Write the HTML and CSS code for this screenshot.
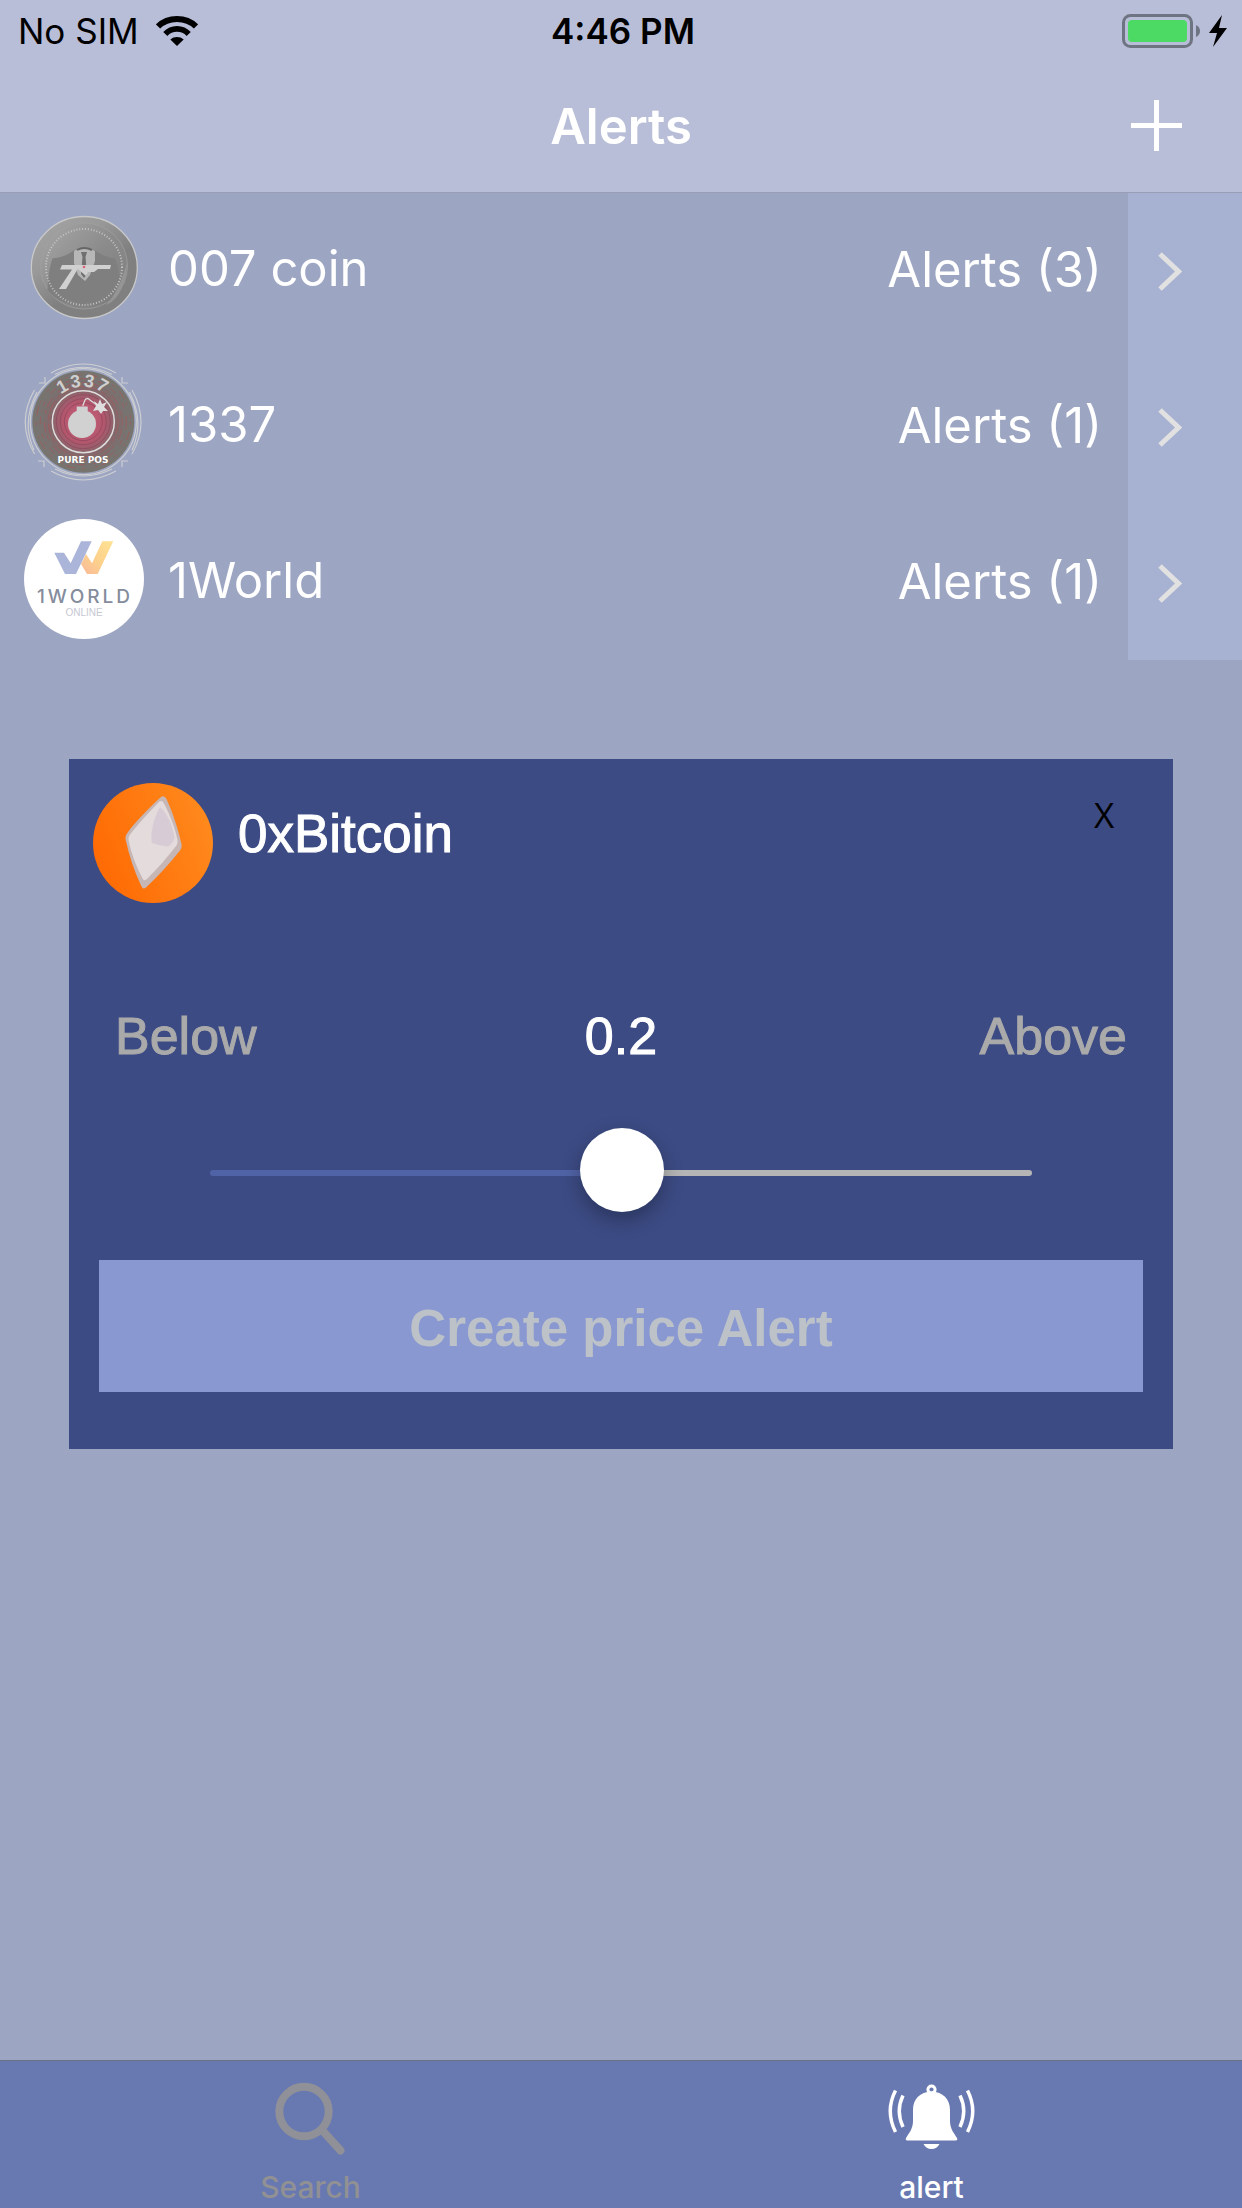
FILE: index.html
```html
<!DOCTYPE html>
<html lang="en">
<head>
<meta charset="utf-8">
<meta name="viewport" content="width=device-width, initial-scale=1">
<title>Alerts</title>
<link rel="stylesheet" href="styles.css">
</head>
<body>
<header class="top">
  <div class="status">
    <div class="status-side">
      <span>No SIM</span>
      <svg class="wifi" viewBox="0 0 42 30" aria-hidden="true">
        <path d="M2 10.500C12 .5 30 .5 40 10.500" fill="none" stroke="#000" stroke-width="6"/>
        <path d="M9.300 18C15.500 11.200 26.500 11.200 32.700 18" fill="none" stroke="#000" stroke-width="5.600"/>
        <path d="M21 30 14.300 23.500C18 20.200 24 20.200 27.700 23.500Z"/>
      </svg>
    </div>
    <span class="status-time">4:46 PM</span>
    <div class="status-side status-right">
      <svg class="battery" viewBox="0 0 106 34" aria-label="Battery charging" role="img">
        <rect x="1.500" y="1.500" width="68" height="31" rx="7" fill="none" stroke="#6f7482" stroke-width="3"/>
        <rect x="6" y="6" width="59" height="22" rx="4" fill="#4cd964"/>
        <path d="M74 11Q78 13 78 17T74 23Z" fill="#6f7482"/>
        <path d="M100 1 87 19H95L91 33 105 14H97Z"/>
      </svg>
    </div>
  </div>
  <div class="nav">
    <h1 class="nav-title">Alerts</h1>
    <button class="nav-add" type="button" aria-label="Add alert">
      <svg viewBox="0 0 51 51" aria-hidden="true"><path d="M25.500 0V51M0 25.500H51" stroke="#fff" stroke-width="5"/></svg>
    </button>
  </div>
</header>

<main class="content">
  <ul class="coins">
    <li class="coin">
      <svg class="coin-logo" viewBox="0 0 120 120" aria-hidden="true">
        <defs>
          <linearGradient id="steel" x1="0" y1="0" x2="1" y2="1"><stop offset="0" stop-color="#a8a8a8"/><stop offset=".5" stop-color="#8b8b8b"/><stop offset="1" stop-color="#7c7c7c"/></linearGradient>
          <linearGradient id="rim" x1="0" y1="0" x2=".8" y2="1"><stop offset="0" stop-color="#a6a6a6"/><stop offset=".35" stop-color="#999"/><stop offset=".65" stop-color="#808080"/></linearGradient>
        </defs>
        <ellipse cx="60.300" cy="60.500" rx="53" ry="51" fill="url(#rim)" stroke="#c9c9c9" stroke-width="1.300"/>
        <ellipse cx="60" cy="59" rx="43.500" ry="43" fill="url(#steel)" stroke="#a0a0a0" stroke-width=".7"/>
        <path d="M23.500 83C24 70 26 58 28.700 51.300C36 51 44 48 50 43.500H71C77 48 85 51 91 51.300C94 60 96 70 95.500 84C86 104 38 104 23.500 83Z" fill="#7f7f7f"/>
        <path d="M103 55C103 78 93 94 82 98C91 88 98 75 103 55Z" fill="#959595"/>
        <circle cx="60" cy="60" r="38" fill="none" stroke="#c4c4c4" stroke-width="2" stroke-dasharray="1 1.900"/>
        <path d="M50 44Q60 38 71 44L71 54 66 68 61 74 54 68 50 56Z" fill="#b7b7b7"/>
        <path d="M57 45H63L61.500 50 63 67 60 71 57 67 58.500 50Z" fill="#707070"/>
        <path d="M53 43Q60 39 68 43" fill="none" stroke="#666" stroke-width="2"/>
        <path d="M38 58H56L42 82H35L48 62.500H36ZM54 58H87L86 62H74L70 65H64L62 69 54 62Z" fill="#d0d0d0"/>
        <circle cx="60" cy="60" r="1.300" fill="#e0607a"/>
      </svg>
      <span class="coin-name">007 coin</span>
      <span class="coin-count">Alerts (3)</span>
      <button class="coin-open" type="button" aria-label="Open 007 coin alerts"><svg viewBox="0 0 24 39" aria-hidden="true"><path d="M2 2 20.500 19.500 2 37" fill="none" stroke="#e1e1e1" stroke-width="5"/></svg></button>
    </li>
    <li class="coin">
      <svg class="coin-logo" viewBox="0 0 120 120" aria-hidden="true">
        <defs>
          <radialGradient id="glow"><stop offset="0" stop-color="#c8607f"/><stop offset=".4" stop-color="#b4566c"/><stop offset=".62" stop-color="#86666a"/><stop offset=".8" stop-color="#787270"/><stop offset="1" stop-color="#777570"/></radialGradient>
          <path id="arc" d="M24.300 58.700A35 35 0 0 1 94.300 58.700"/>
        </defs>
        <g fill="none" stroke="#cdced2" stroke-width="1.200">
          <path d="M27 10Q59 -8 92 10M31 11.500Q59 -3 88 11.500M27 108Q59 126 92 108M31 106Q59 120 88 106M10.500 27Q-8 59 10.500 91M13 29Q-3 59 10 87M108 27Q126 59 108 91M105.500 29Q121 59 108 87"/>
          <circle cx="59.300" cy="58.700" r="53"/>
          <path d="M15 20H21V14M98 14V20H104M14 98H20V104M104 98H98V104"/>
        </g>
        <circle cx="59.300" cy="58.700" r="51" fill="url(#glow)"/>
        <g fill="none" stroke="#a2595c" stroke-width=".8">
          <circle cx="59.300" cy="58.700" r="47" stroke-dasharray="3 7 9 4 2 11"/>
          <circle cx="59.300" cy="58.700" r="43" stroke-dasharray="8 5 2 4 5 9"/>
          <circle cx="59.300" cy="58.700" r="39" stroke-dasharray="4 3 11 8"/>
          <circle cx="59.300" cy="58.700" r="35" stroke-dasharray="12 4 5 3"/>
          <circle cx="59.300" cy="58.700" r="27" stroke="#8f4860"/>
          <circle cx="59.300" cy="58.700" r="23" stroke="#8f4860"/>
          <circle cx="59.300" cy="58.700" r="19" stroke="#8f4860"/>
        </g>
        <circle cx="59.300" cy="58.700" r="31" fill="none" stroke="#dedede" stroke-width="1.500"/>
        <circle cx="58" cy="61" r="14" fill="#d2d1d1"/>
        <rect x="52.700" y="43.500" width="11" height="7" fill="#d2d1d1"/>
        <path d="M58.700 43 61 37Q63 34 66 37L73 42" fill="none" stroke="#ddd" stroke-width="1.300"/>
        <path d="M76 36 78 41 83 39 80 44 84 48 79 48 77 51 74 47 69 48 72 43 70 38 74 41Z" fill="#dedede"/>
        <text class="leet-text"><textPath href="#arc" startOffset="50%">1337</textPath></text>
        <text class="pos-text" x="59" y="100">PURE POS</text>
      </svg>
      <span class="coin-name">1337</span>
      <span class="coin-count">Alerts (1)</span>
      <button class="coin-open" type="button" aria-label="Open 1337 alerts"><svg viewBox="0 0 24 39" aria-hidden="true"><path d="M2 2 20.500 19.500 2 37" fill="none" stroke="#e1e1e1" stroke-width="5"/></svg></button>
    </li>
    <li class="coin">
      <svg class="coin-logo" viewBox="0 0 120 120" aria-hidden="true">
        <defs><linearGradient id="amber" x1="0" y1="1" x2="1" y2="0"><stop offset="0" stop-color="#f8b99a"/><stop offset=".45" stop-color="#fdd08c"/><stop offset="1" stop-color="#ffe394"/></linearGradient></defs>
        <circle cx="60" cy="60" r="60" fill="#fff"/>
        <path d="M62 35 68 44.300 78.300 22.300H89.300L73.700 55H63L57 45Z" fill="url(#amber)"/>
        <path d="M30.300 33.700H40L46.700 44.300 57 22.300H67.700L52 55H41Z" fill="#abb5da"/>
        <text class="world-text" x="61" y="84">1WORLD</text>
        <text class="online-text" x="60" y="97">ONLINE</text>
      </svg>
      <span class="coin-name">1World</span>
      <span class="coin-count">Alerts (1)</span>
      <button class="coin-open" type="button" aria-label="Open 1World alerts"><svg viewBox="0 0 24 39" aria-hidden="true"><path d="M2 2 20.500 19.500 2 37" fill="none" stroke="#e1e1e1" stroke-width="5"/></svg></button>
    </li>
  </ul>
</main>

<div class="overlay">
  <section class="dialog" role="dialog" aria-labelledby="dialog-title">
    <div class="dialog-head">
      <svg class="dialog-logo" viewBox="0 0 120 120" aria-hidden="true">
        <defs><linearGradient id="orange" x1="0" y1=".7" x2="1" y2=".3"><stop offset="0" stop-color="#ff6903"/><stop offset="1" stop-color="#ff8a1d"/></linearGradient></defs>
        <circle cx="60" cy="60" r="60" fill="url(#orange)"/>
        <path d="M67.500 14.500Q71 11.500 73.500 16C80 30 85.500 47 88.700 62Q89 65 87 67.500C77 80 65 93 53 104.500Q50 107 48.500 103.500C41 88 36 72 32.500 56Q32 53 34 50.500C43 38 55 26 67.500 14.500Z" fill="#c6b6b6"/>
        <path d="M66 19Q69 16.500 71 20.500C77 32 82 44 84.500 57Q85 60 83.500 62.500C74 75 64 86 54 96Q51 98.500 49.500 95.500C43 83 38 70 35.500 57Q35 54 37 51.500C46 40 56 29 66 19Z" fill="#e4dbdc"/>
        <path d="M67 24C75 31 79 42 81.500 54Q81 60 75 63.500Q66 63 59 60Q58 57 58.500 50C60 39 63 31 67 24Z" fill="#d7ccd5"/>
      </svg>
      <h2 class="dialog-title" id="dialog-title">0xBitcoin</h2>
      <button class="dialog-close" type="button" aria-label="Close">X</button>
    </div>
    <div class="range-labels">
      <span>Below</span>
      <output class="range-value" for="price">0.2</output>
      <span class="range-end">Above</span>
    </div>
    <input class="range" id="price" type="range" min="0" max="100" step="any" value="50.2" aria-label="Alert price">
    <button class="create" type="button">Create price Alert</button>
  </section>
</div>

<nav class="tabs">
  <a class="tab" href="#search">
    <svg class="tab-icon" viewBox="0 0 90 76" aria-hidden="true">
      <circle cx="38" cy="32.500" r="24.700" fill="none" stroke="#8f9098" stroke-width="8"/>
      <path d="M56 51 74.500 71.500" stroke="#8f9098" stroke-width="8" stroke-linecap="round"/>
    </svg>
    <span>Search</span>
  </a>
  <a class="tab tab-active" href="#alert" aria-current="page">
    <svg class="tab-icon" viewBox="0 0 90 76" aria-hidden="true">
      <circle cx="44.500" cy="10.500" r="3.600" fill="none" stroke="#fff" stroke-width="3"/>
      <path d="M44.500 12.500C56 13 63 20 63 31V42C63 50 67 54 70 59Q71 61.500 68.500 61.500H20.500Q18 61.500 19 59C22 54 26 50 26 42V31C26 20 33 13 44.500 12.500ZM36.500 65H52.500Q50 70 44.500 70T36.500 65Z" fill="#fff"/>
      <path d="M16 16.500Q8.500 32 16 48M8.500 11.500Q-2 32 8.500 53M73 16.500Q80.500 32 73 48M80.500 11.500Q91 32 80.500 53" fill="none" stroke="#fff" stroke-width="3.500"/>
    </svg>
    <span>alert</span>
  </a>
</nav>
</body>
</html>
```
FILE: styles.css
```css
* {
  box-sizing: border-box;
}

body {
  margin: 0;
  min-height: 100vh;
  display: flex;
  flex-direction: column;
  background: #9ca5c1;
  color: #fff;
  font-family: Inter, "Liberation Sans", sans-serif;
  font-size: 49px;
}

h1,
h2,
ul {
  margin: 0;
  padding: 0;
}

button {
  padding: 0;
  border: 0;
  background: none;
  color: inherit;
  font: inherit;
}

svg {
  display: block;
}

/* Status bar and title */
.top {
  background: #b9bed8;
  box-shadow: 0 1px #989eb5;
  position: relative;
}

.status,
.nav {
  display: grid;
  grid-template-columns: 1fr auto 1fr;
  align-items: center;
}

.status {
  height: 60px;
  padding: 2px 14px 0 18px;
  color: #000;
  font-size: 35px;
  line-height: 58px;
}

.status-side {
  display: flex;
  align-items: center;
  gap: 17px;
}

.status-right {
  justify-content: flex-end;
}

.status-time {
  font-weight: 600;
}

.wifi {
  width: 42px;
  height: 30px;
}

.battery {
  width: 106px;
  height: 34px;
}

.nav {
  height: 132px;
  padding: 0 60px 2px;
}

.nav-title {
  grid-column: 2;
  padding-top: 4px;
  font-size: 49px;
  font-weight: 600;
  line-height: 60px;
}

.nav-add {
  justify-self: end;
  width: 51px;
  height: 51px;
}

/* Coin list */
.content {
  flex: 1;
}

.coins {
  list-style: none;
}

.coin {
  display: flex;
  height: 156px;
  padding-left: 24px;
  line-height: 60px;
}

.coin-logo,
.dialog-logo {
  flex: none;
  width: 120px;
  height: 120px;
}

.coin-logo {
  margin-top: 15px;
}

.coin-name {
  flex: 1;
  margin: 47px 0 0 24px;
}

.coin-count {
  margin: 48px 26px 0 0;
}

.coin-open {
  display: flex;
  align-items: center;
  width: 114px;
  padding: 2px 0 0 30px;
  background: #a7b1d1;
}

.coin-open svg {
  width: 24px;
  height: 39px;
}

.leet-text,
.pos-text,
.world-text,
.online-text {
  text-anchor: middle;
}

.leet-text {
  font: bold 18px "Liberation Sans", sans-serif;
  letter-spacing: 2px;
  fill: #d0d0d0;
}

.pos-text {
  font: bold 9px "DejaVu Sans", sans-serif;
  fill: #fff;
}

.world-text {
  font: 500 19px Inter, sans-serif;
  letter-spacing: 3px;
  fill: #858c9c;
}

.online-text {
  font: 10px "Liberation Sans", sans-serif;
  fill: #c6c8d2;
}

/* New alert dialog */
.overlay {
  position: fixed;
  inset: 0;
  display: grid;
  align-items: center;
  padding: 0 69px;
  pointer-events: none;
}

.dialog {
  display: flex;
  flex-direction: column;
  padding: 24px 30px 57px;
  background: #3c4b84;
  font-family: "Liberation Sans", Arial, sans-serif;
  font-size: 52px;
  line-height: 60px;
  pointer-events: auto;
}

.dialog-head {
  display: flex;
  align-items: flex-start;
  margin-left: -6px;
}

.dialog-title {
  flex: 1;
  margin: 21px 0 0 25px;
  font-size: 53px;
  font-weight: 400;
  -webkit-text-stroke: 1px currentColor;
}

.dialog-close {
  width: 60px;
  height: 60px;
  margin: 2px 9px 0 0;
  color: #000;
  font-family: "Open Sans", sans-serif;
  font-size: 35px;
}

.range-labels {
  display: grid;
  grid-template-columns: 1fr auto 1fr;
  margin-top: 103px;
  padding: 0 16px;
  color: #aaa;
  -webkit-text-stroke: 1px currentColor;
}

.range-value {
  color: #fff;
}

.range-end {
  text-align: right;
}

.range {
  appearance: none;
  height: 84px;
  margin: 65px 111px 45px;
  background: none;
}

.range::-webkit-slider-runnable-track {
  height: 6px;
  border-radius: 3px;
  background: linear-gradient(to right, #5063a6 50%, #b5b5b5 50%);
}

.range::-webkit-slider-thumb {
  appearance: none;
  width: 84px;
  height: 84px;
  margin-top: -42px;
  border-radius: 50%;
  background: #fff;
  box-shadow: 0 8px 20px rgba(0, 0, 0, 0.3);
}

.create {
  height: 132px;
  padding-top: 6px;
  background: #8998d1;
  color: #bcc2c8;
  font-size: 51px;
  font-weight: 700;
}

/* Tab bar */
.tabs {
  display: flex;
  height: 148px;
  border-top: 1px solid #6b7288;
  background: #6878b1;
  font-size: 30px;
  font-weight: 500;
  line-height: 36px;
}

.tab {
  flex: 1;
  display: flex;
  flex-direction: column;
  align-items: center;
  gap: 14px;
  padding-top: 18px;
  color: #919194;
  text-decoration: none;
}

.tab-active {
  color: #fff;
}

.tab-icon {
  width: 90px;
  height: 76px;
}
```
